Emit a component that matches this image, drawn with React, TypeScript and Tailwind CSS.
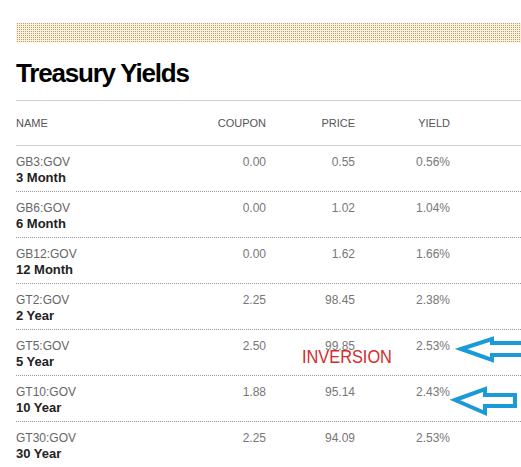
const rows = [
  { code: 'GB3:GOV', name: '3 Month', coupon: '0.00', price: '0.55', yld: '0.56%' },
  { code: 'GB6:GOV', name: '6 Month', coupon: '0.00', price: '1.02', yld: '1.04%' },
  { code: 'GB12:GOV', name: '12 Month', coupon: '0.00', price: '1.62', yld: '1.66%' },
  { code: 'GT2:GOV', name: '2 Year', coupon: '2.25', price: '98.45', yld: '2.38%' },
  { code: 'GT5:GOV', name: '5 Year', coupon: '2.50', price: '99.85', yld: '2.53%' },
  { code: 'GT10:GOV', name: '10 Year', coupon: '1.88', price: '95.14', yld: '2.43%' },
  { code: 'GT30:GOV', name: '30 Year', coupon: '2.25', price: '94.09', yld: '2.53%' },
];

const cols = 'grid grid-cols-[160px_90px_89px_95px_1fr]';

export default function App() {
  return (
    <div className="relative h-[467px] w-full overflow-hidden bg-white font-['Liberation_Sans',Arial,sans-serif]">
      <div className="pl-4 pt-[23px]">
        {/* dotted tan band */}
        <div className="h-5 bg-[#faf2dd] bg-[conic-gradient(#b9a06e_25%,transparent_0)] bg-[length:2px_2px]" />
        <h1 className="mt-[15px] h-[42px] text-[26px] leading-[30px] font-bold tracking-[-1.2px] text-black">
          Treasury Yields
        </h1>

        <div className={`${cols} h-[45px] items-center border-t border-[#d0d0d0] text-[11px] text-[#555]`}>
          <div>NAME</div>
          <div className="text-right">COUPON</div>
          <div className="text-right">PRICE</div>
          <div className="text-right">YIELD</div>
        </div>

        <div className="border-t border-[#d0d0d0]">
          {rows.map((r) => (
            <div
              key={r.code}
              className={`${cols} h-[46px] border-b border-dotted border-[#999] pt-[8px] text-[12px] leading-[16px]`}
            >
              <div>
                <div className="text-[#666]">{r.code}</div>
                <div className="text-[13px] font-bold text-[#222]">{r.name}</div>
              </div>
              <div className="text-right text-[#777]">{r.coupon}</div>
              <div className="text-right text-[#777]">{r.price}</div>
              <div className="text-right text-[#777]">{r.yld}</div>
            </div>
          ))}
        </div>
      </div>

      <div className="absolute left-[302px] top-[346px] origin-left scale-x-[0.86] text-[19px] leading-[22px] text-[#d42a2a]">
        INVERSION
      </div>

      <svg className="absolute left-0 top-0" width="521" height="467" viewBox="0 0 521 467">
        <path
          d="M461 349 L492 339 L492 343 L525 343 L525 355 L492 355 L492 360 Z"
          fill="none"
          stroke="#1a9ad6"
          strokeWidth="4"
          strokeLinejoin="miter"
        />
        <path
          d="M455 400 L485 389 L485 395 L515 395 L515 406 L485 406 L485 413 Z"
          fill="none"
          stroke="#1a9ad6"
          strokeWidth="4"
          strokeLinejoin="miter"
        />
      </svg>
    </div>
  );
}
